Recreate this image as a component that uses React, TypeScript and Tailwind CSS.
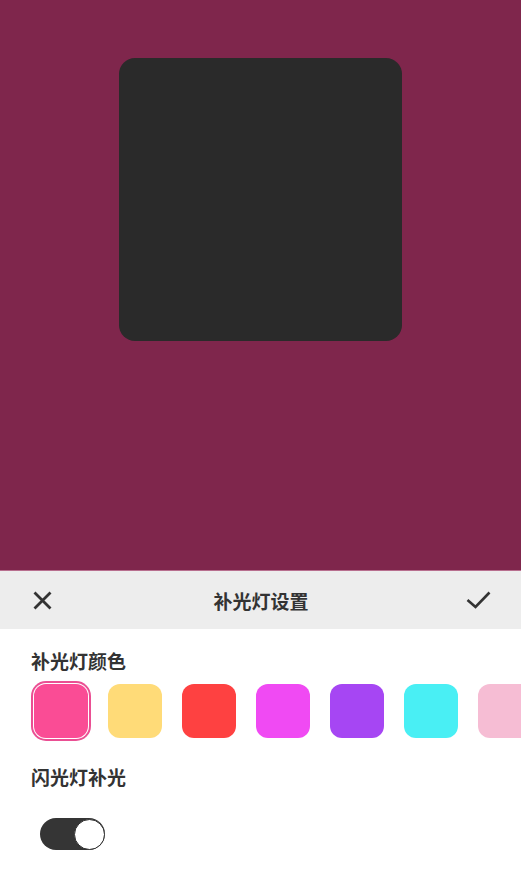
import React from "react";

const colors = ["#fa4c95", "#ffdb78", "#fe4141", "#f04af3", "#a646f3", "#49eff4", "#f6bdd4"];

export default function App() {
  return (
    <div
      className="w-[521px] h-[870px] overflow-hidden flex flex-col bg-white"
      style={{ fontFamily: '"Noto Sans CJK SC", "Noto Sans", sans-serif' }}
    >
      <div className="h-[570px] shrink-0 bg-[#7f264c] flex justify-center pt-[58px]">
        <div className="w-[283px] h-[283px] rounded-[16px] bg-[#2a2a2a]" />
      </div>
      <div className="h-[59px] shrink-0 bg-[#ededed] border-t border-[#b86f8f] flex items-center justify-between pl-[33px] pr-[30px]">
        <svg width="19" height="19" viewBox="0 0 19 19">
          <path d="M1.5 1.5 L17.5 17.5 M17.5 1.5 L1.5 17.5" stroke="#333" strokeWidth="2.8" strokeLinecap="butt" />
        </svg>
        <div className="text-[19px] leading-none font-bold text-[#333] ml-[4px]">补光灯设置</div>
        <svg width="25" height="18" viewBox="0 0 25 18">
          <path d="M1.5 9 L9.5 16 L23.5 1.5" stroke="#333" strokeWidth="2.6" fill="none" strokeLinecap="butt" strokeLinejoin="miter" />
        </svg>
      </div>
      <div className="pl-[31px] flex flex-col">
        <div className="mt-[22px] text-[19px] leading-none font-bold text-[#333]">补光灯颜色</div>
        <div className="mt-[14px] flex gap-[20px] pl-[3px]">
          {colors.map((c, i) => (
            <div
              key={c}
              className={
                "w-[54px] h-[54px] shrink-0 rounded-[12px] " +
                (i === 0 ? "ring-2 ring-[#ea4f93] ring-offset-1 ring-offset-white" : "")
              }
              style={{ backgroundColor: c }}
            />
          ))}
        </div>
        <div className="mt-[29px] text-[19px] leading-none font-bold text-[#333]">闪光灯补光</div>
        <div className="mt-[32px] ml-[9px] w-[65px] h-[32px] rounded-full bg-[#353535] flex items-center justify-end">
          <div className="w-[31px] h-[31px] rounded-full bg-white border border-[#333]" />
        </div>
      </div>
    </div>
  );
}
